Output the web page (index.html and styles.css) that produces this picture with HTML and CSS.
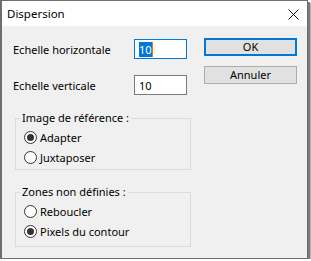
FILE: index.html
```html
<!DOCTYPE html>
<html lang="fr">
<head>
    <meta charset="UTF-8">
    <title>Dispersion</title>
    <link rel="stylesheet" href="styles.css">
</head>
<body>
    <div class="window">
        <div class="titlebar">
            <span class="title">Dispersion</span>
            <svg class="close" width="11" height="11" viewBox="0 0 11 11">
                <path d="M0.5 0.5 L10.5 10.5 M10.5 0.5 L0.5 10.5" stroke="#111" stroke-width="1" fill="none"/>
            </svg>
        </div>

        <div class="body">
            <div class="left">
                <div class="field">
                    <span class="label">Echelle horizontale</span>
                    <div class="input focused"><span class="sel">10</span><span class="caret"></span></div>
                </div>
                <div class="field">
                    <span class="label">Echelle verticale</span>
                    <div class="input">10</div>
                </div>

                <fieldset class="group first">
                    <legend>Image de référence :</legend>
                    <label class="radio"><span class="dot checked"></span>Adapter</label>
                    <label class="radio"><span class="dot"></span>Juxtaposer</label>
                </fieldset>

                <fieldset class="group second">
                    <legend>Zones non définies :</legend>
                    <label class="radio"><span class="dot"></span>Reboucler</label>
                    <label class="radio"><span class="dot checked"></span>Pixels du contour</label>
                </fieldset>
            </div>

            <div class="right">
                <button class="btn default">OK</button>
                <button class="btn">Annuler</button>
            </div>
        </div>
    </div>
</body>
</html>
```

FILE: styles.css
```css
* {
    box-sizing: border-box;
}

body {
    margin: 0;
    padding: 0;
    background: #ffffff;
    font-family: 'Noto Sans', sans-serif;
    font-size: 11px;
    color: #000;
}

.window {
    width: 308px;
    height: 259px;
    border: 1px solid #6e6e6e;
    border-left-width: 2px;
    background: #f0f0f0;
    box-shadow: 2px 2px 0 #7a7a7a, 3px 3px 0 #b4b4b4;
    display: flex;
    flex-direction: column;
}

.titlebar {
    height: 25px;
    flex-shrink: 0;
    background: #fff;
    display: flex;
    align-items: center;
    justify-content: space-between;
    padding: 0 8px 0 5px;
}

.title {
    font-size: 11.5px;
}

.close {
    margin-top: 1px;
}

.body {
    display: flex;
    padding: 12px 9px 0 11px;
}

.left {
    width: 177px;
}

.field {
    display: flex;
    align-items: center;
    height: 20px;
    margin-top: 1px;
    margin-bottom: 16px;
}

.label {
    width: 121px;
}

.input {
    width: 53px;
    height: 20px;
    border: 1px solid #7a7a7a;
    background: #fff;
    padding-left: 4px;
    display: flex;
    align-items: center;
}

.input.focused {
    border-color: #0078d7;
}

.sel {
    background: #0078d7;
    color: #fff;
    line-height: 15px;
}

.caret {
    width: 1px;
    height: 15px;
    background: #e8731a;
}

.group {
    margin: 0 0 0 2px;
    padding: 2px 0 2px 8px;
    border: 1px solid #dcdcdc;
    width: 176px;
}

.group.first {
    margin-top: 15px;
}

.group.second {
    margin-top: 15px;
    padding-bottom: 5px;
}

.group legend {
    padding: 0 2px;
    margin-left: -4px;
    line-height: 14px;
}

.radio {
    display: flex;
    align-items: center;
    height: 20px;
}

.dot {
    width: 13px;
    height: 13px;
    border: 1px solid #333;
    border-radius: 50%;
    background: #fff;
    margin-right: 3px;
    display: flex;
    align-items: center;
    justify-content: center;
}

.dot.checked::after {
    content: "";
    width: 7px;
    height: 7px;
    border-radius: 50%;
    background: #333;
}

.right {
    margin-left: 14px;
    display: flex;
    flex-direction: column;
}

.btn {
    width: 93px;
    height: 18px;
    background: #e1e1e1;
    border: 1px solid #adadad;
    font-family: 'Noto Sans', sans-serif;
    font-size: 11px;
    color: #000;
    padding: 0;
    margin: 0 0 10px 0;
    line-height: 16px;
}

.btn.default {
    border: 2px solid #0078d7;
    line-height: 14px;
}
```
